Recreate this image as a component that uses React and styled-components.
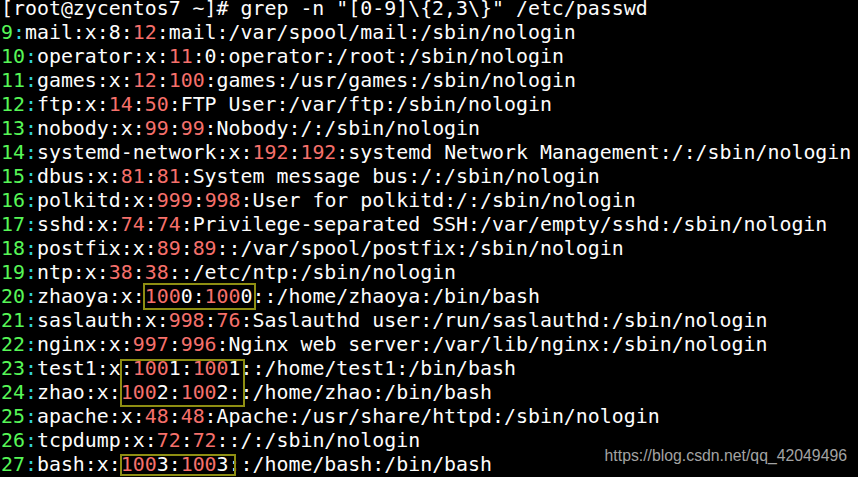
import React from 'react'
import styled, { createGlobalStyle } from 'styled-components'

const GlobalStyle = createGlobalStyle`
  html, body {
    margin: 0;
    padding: 0;
    background: #000;
  }
`

const Terminal = styled.div`
  position: relative;
  width: 858px;
  height: 477px;
  overflow: hidden;
  background: #000;
`

const Screen = styled.pre`
  margin: 0;
  padding: 0 0 0 1px;
  font-family: 'DejaVu Sans Mono', monospace;
  font-size: 19.9px;
  color: #fdfdfd;
  white-space: pre;
`

// fixed 24px rows, with a tight line box so the baseline sits ~16px down
const Line = styled.div`
  height: 24px;
  line-height: 18px;
`

const LineNo = styled.span`
  color: #57f757;
`

const Sep = styled.span`
  color: #33d2dc;
`

const Match = styled.span`
  color: #f6706b;
`

const Mark = styled.div`
  position: absolute;
  box-sizing: border-box;
  border: 2px solid #8e8e12;
  left: ${p => p.x}px;
  top: ${p => p.y}px;
  width: ${p => p.w}px;
  height: ${p => p.h}px;
`

const Watermark = styled.div`
  position: absolute;
  right: 11px;
  top: 448px;
  font-family: 'Liberation Sans', Arial, sans-serif;
  font-size: 15.8px;
  line-height: 16px;
  color: #a3a3a3;
`

const PROMPT = '[root@zycentos7 ~]# grep -n "[0-9]\\{2,3\\}" /etc/passwd'

// | toggles the grep match colour
const rows = [
  [9, 'mail:x:8:|12|:mail:/var/spool/mail:/sbin/nologin'],
  [10, 'operator:x:|11|:0:operator:/root:/sbin/nologin'],
  [11, 'games:x:|12|:|100|:games:/usr/games:/sbin/nologin'],
  [12, 'ftp:x:|14|:|50|:FTP User:/var/ftp:/sbin/nologin'],
  [13, 'nobody:x:|99|:|99|:Nobody:/:/sbin/nologin'],
  [14, 'systemd-network:x:|192|:|192|:systemd Network Management:/:/sbin/nologin'],
  [15, 'dbus:x:|81|:|81|:System message bus:/:/sbin/nologin'],
  [16, 'polkitd:x:|999|:|998|:User for polkitd:/:/sbin/nologin'],
  [17, 'sshd:x:|74|:|74|:Privilege-separated SSH:/var/empty/sshd:/sbin/nologin'],
  [18, 'postfix:x:|89|:|89|::/var/spool/postfix:/sbin/nologin'],
  [19, 'ntp:x:|38|:|38|::/etc/ntp:/sbin/nologin'],
  [20, 'zhaoya:x:|100|0:|100|0::/home/zhaoya:/bin/bash'],
  [21, 'saslauth:x:|998|:|76|:Saslauthd user:/run/saslauthd:/sbin/nologin'],
  [22, 'nginx:x:|997|:|996|:Nginx web server:/var/lib/nginx:/sbin/nologin'],
  [23, 'test1:x:|100|1:|100|1::/home/test1:/bin/bash'],
  [24, 'zhao:x:|100|2:|100|2::/home/zhao:/bin/bash'],
  [25, 'apache:x:|48|:|48|:Apache:/usr/share/httpd:/sbin/nologin'],
  [26, 'tcpdump:x:|72|:|72|::/:/sbin/nologin'],
  [27, 'bash:x:|100|3:|100|3::/home/bash:/bin/bash']
]

const marks = [
  { x: 143, y: 283, w: 113, h: 27 },
  { x: 120, y: 359, w: 125, h: 48 },
  { x: 120, y: 454, w: 116, h: 22 }
]

const Text = ({ src }) =>
  src.split('|').map((part, i) =>
    i % 2 ? <Match key={i}>{part}</Match> : <React.Fragment key={i}>{part}</React.Fragment>
  )

const App = () => (
  <Terminal>
    <GlobalStyle />
    <Screen>
      <Line>{PROMPT}</Line>
      {rows.map(([n, src]) => (
        <Line key={n}>
          <LineNo>{n}</LineNo>
          <Sep>:</Sep>
          <Text src={src} />
        </Line>
      ))}
    </Screen>
    {marks.map((m, i) => (
      <Mark key={i} {...m} />
    ))}
    <Watermark>https://blog.csdn.net/qq_42049496</Watermark>
  </Terminal>
)

export default App
